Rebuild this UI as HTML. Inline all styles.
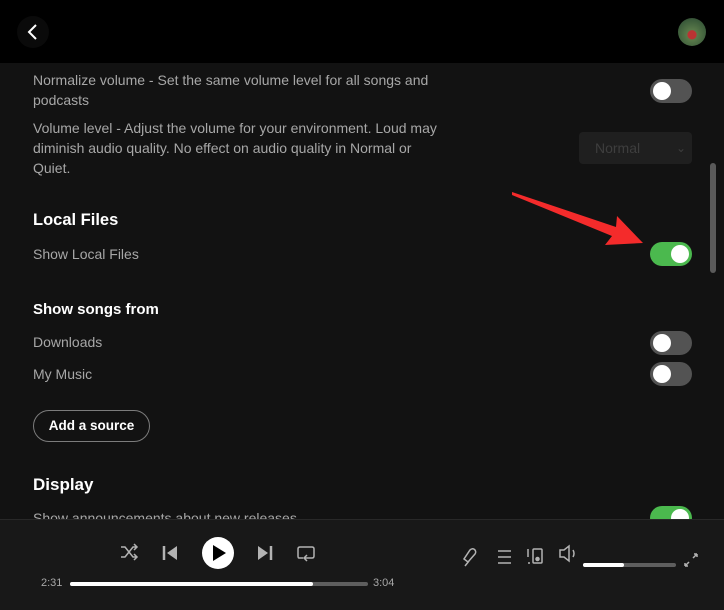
<!DOCTYPE html>
<html><head><meta charset="utf-8"><style>
*{margin:0;padding:0;box-sizing:border-box}
body{width:724px;height:610px;overflow:hidden;background:#121212;font-family:"Liberation Sans",sans-serif;position:relative;color:#b3b3b3}
.a{position:absolute}
.t{font-size:14px;line-height:20px;color:#a7a7a7;white-space:nowrap}
.h{color:#fff;font-weight:bold}
.tg{position:absolute;width:42px;height:24px;border-radius:12px;background:#535353}
.tg::after{content:"";position:absolute;top:3px;left:3px;width:18px;height:18px;border-radius:50%;background:#fff}
.tg.on{background:#4bb94e}
.tg.on::after{left:21px}
</style></head><body>
<div class="a" style="left:0;top:0;width:724px;height:63px;background:#000"></div>
<div class="a" style="left:17px;top:16px;width:32px;height:32px;border-radius:50%;background:#0a0a0a"></div>
<svg class="a" style="left:17px;top:16px" width="32" height="32"><path d="M19 9 L12 16 L19 23" stroke="#fff" stroke-width="2" fill="none"/></svg>
<div class="a" style="left:678px;top:18px;width:28px;height:28px;border-radius:50%;background:radial-gradient(circle at 50% 60%,#b33 0 20%,#5a7a4a 22%,#3a5a3a 70%,#222 100%)"></div>

<div class="a t" style="left:33px;top:70px">Normalize volume - Set the same volume level for all songs and<br>podcasts</div>
<div class="tg" style="left:650px;top:79px"></div>
<div class="a t" style="left:33px;top:118px">Volume level - Adjust the volume for your environment. Loud may<br>diminish audio quality. No effect on audio quality in Normal or<br>Quiet.</div>
<div class="a" style="left:579px;top:132px;width:113px;height:32px;border-radius:4px;background:#1f1f1f;color:#3e3e3e;font-size:14px;line-height:32px;padding-left:16px">Normal<span style="position:absolute;right:6px;font-size:12px">&#8964;</span></div>

<div class="a h" style="left:33px;top:211px;font-size:16.5px">Local Files</div>
<div class="a t" style="left:33px;top:244px">Show Local Files</div>
<div class="tg on" style="left:650px;top:242px"></div>

<div class="a h" style="left:33px;top:301px;font-size:15px">Show songs from</div>
<div class="a t" style="left:33px;top:332px">Downloads</div>
<div class="tg" style="left:650px;top:331px"></div>
<div class="a t" style="left:33px;top:364px">My Music</div>
<div class="tg" style="left:650px;top:362px"></div>
<div class="a h" style="left:33px;top:410px;width:117px;height:32px;border:1px solid #7c7c7c;border-radius:16px;font-size:13.5px;line-height:30px;text-align:center">Add a source</div>

<div class="a h" style="left:33px;top:475px;font-size:17px">Display</div>
<div class="a t" style="left:33px;top:508px">Show announcements about new releases</div>
<div class="tg on" style="left:650px;top:506px"></div>

<div class="a" style="left:710px;top:163px;width:6px;height:110px;border-radius:3px;background:#5a5a5a"></div>

<svg class="a" style="left:0;top:0" width="724" height="300"><polygon points="512,192 616,227 617,216 643,243 605,245 612,236 512,195" fill="#f42b2b"/></svg>

<div class="a" style="left:0;top:519px;width:724px;height:91px;background:#181818;border-top:1px solid #282828"></div>
<svg class="a" style="left:0;top:519px" width="724" height="91" fill="none" stroke="#b3b3b3" stroke-width="1.5">
<path d="M121 28 L125 28 L133 38 L137 38 M121 38 L125 38 L133 28 L137 28 M134 25 L137 28 L134 31 M134 35 L137 38 L134 41"/>
<path d="M164 27 L164 41" stroke-width="2.5"/><polygon points="177,27 177,41 167,34" fill="#b3b3b3" stroke="none"/>
<circle cx="218" cy="34" r="16" fill="#fff" stroke="none"/><polygon points="213,26 213,42 226,34" fill="#000" stroke="none"/>
<polygon points="258,27 258,41 268,34" fill="#b3b3b3" stroke="none"/><path d="M271 27 L271 41" stroke-width="2.5"/>
<path d="M303 39 L299 39 Q298 39 298 37 L298 30 Q298 28 300 28 L312 28 Q314 28 314 30 L314 37 Q314 39 312 39 L305 39 M307 36 L304 39 L307 42"/>
<path d="M465 47 L469 42 M468 43 L475 35 A3 3 0 0 0 470 31 L464 40 Z" />
<path d="M498 32 L511 32 M498 38 L511 38 M498 44 L511 44"/>
<path d="M528 30 L528 38 M530 44 L528 44" /><rect x="533" y="30" width="9" height="14" rx="1"/><circle cx="537.5" cy="40" r="1.5" fill="#b3b3b3"/>
<path d="M560 31 L564 31 L569 27 L569 42 L564 38 L560 38 Z M573 31 Q575 34.5 573 38"/>
<path d="M685 47 L689 43 M685 47 L685 44 M685 47 L688 47 M697 35 L693 39 M697 35 L694 35 M697 35 L697 38"/>
</svg>
<div class="a" style="left:70px;top:582px;width:298px;height:4px;border-radius:2px;background:#5e5e5e"></div>
<div class="a" style="left:70px;top:582px;width:243px;height:4px;border-radius:2px;background:#fff"></div>
<div class="a" style="left:41px;top:577px;font-size:11px;color:#a7a7a7">2:31</div>
<div class="a" style="left:373px;top:577px;font-size:11px;color:#a7a7a7">3:04</div>
<div class="a" style="left:583px;top:563px;width:93px;height:4px;border-radius:2px;background:#5e5e5e"></div>
<div class="a" style="left:583px;top:563px;width:41px;height:4px;border-radius:2px;background:#fff"></div>
</body></html>
